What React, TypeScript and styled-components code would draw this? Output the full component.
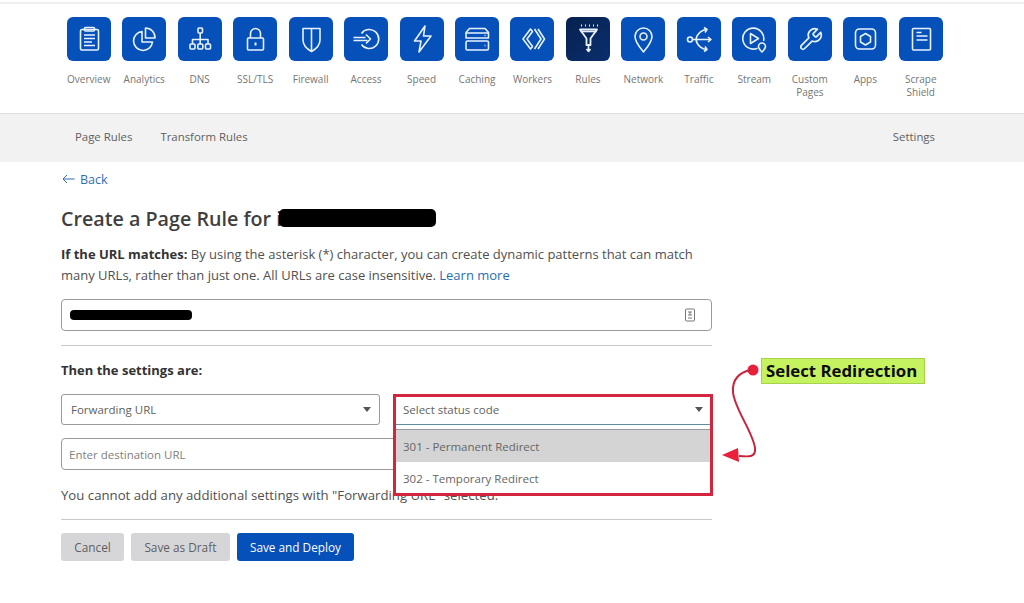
import * as React from 'react';
import styled, { createGlobalStyle } from 'styled-components';

const BLUE = '#0650ba';
const FONT = '"Open Sans", "Noto Sans", sans-serif';

const GlobalStyle = createGlobalStyle`
  html, body {
    margin: 0;
    background: #fff;
    overflow: hidden;
  }
  body {
    font-family: ${FONT};
    color: #4a4a4a;
  }
  * {
    box-sizing: border-box;
  }
`;

const NAV_ITEMS = [
  {
    label: 'Overview',
    icon: (
      <>
        <rect x="13.5" y="12.5" width="18" height="20.5" rx="1.5" />
        <rect x="17.5" y="10.5" width="10" height="3.5" rx="1" />
        <path d="M17 18h11M17 21.5h11M17 25h8M17 28.5h11" />
      </>
    ),
  },
  {
    label: 'Analytics',
    icon: (
      <>
        <path d="M20 14.5a9.5 9.5 0 1 0 10.5 10.5H20z" />
        <path d="M23.5 11a9.5 9.5 0 0 1 9.5 10h-9.5z" />
      </>
    ),
  },
  {
    label: 'DNS',
    icon: (
      <>
        <rect x="20" y="11" width="4.5" height="5" rx="1" />
        <path d="M22.2 16v11M14.5 27v-4.5h15.5V27" />
        <rect x="12" y="27" width="5" height="5" rx="1" />
        <rect x="19.8" y="27" width="5" height="5" rx="1" />
        <rect x="27.5" y="27" width="5" height="5" rx="1" />
      </>
    ),
  },
  {
    label: 'SSL/TLS',
    icon: (
      <>
        <rect x="14.5" y="21" width="16" height="12" rx="1" />
        <path d="M17.5 21v-4.5a5 5 0 0 1 10 0V21" />
        <path d="M22.5 25.5v3" strokeWidth="2" />
      </>
    ),
  },
  {
    label: 'Firewall',
    icon: (
      <>
        <path d="M14 11.5h17V23c0 5-4 9-8.500 11.500C18 32 14 28 14 23z" />
        <path d="M22.500 12v22" />
      </>
    ),
  },
  {
    label: 'Access',
    icon: (
      <>
        <path d="M17.500 16.500a9.500 9.500 0 1 1 0 11" />
        <path d="M9.500 20.500h12M9.500 23.500h14M22 17.500l4.500 4.500-4.500 4.500" />
      </>
    ),
  },
  {
    label: 'Speed',
    icon: <path d="M25 9L14.500 24H21l-2 11 12-16h-7.500z" />,
  },
  {
    label: 'Caching',
    icon: (
      <>
        <path d="M14.500 11.500h15.500l3.500 4v5.500h-22.500v-5.500z" />
        <rect x="11" y="24" width="22.500" height="9" rx="1.500" />
        <path d="M11 16h22.500M29.500 18.500h1M29.500 28.500h1" />
      </>
    ),
  },
  {
    label: 'Workers',
    icon: (
      <>
        <path d="M20.500 12L13 22l7.500 10 2-2.500L17 22l5.500-7.500z" />
        <path d="M24.500 12l6.500 10-6.500 10M28 12l6.500 10L28 32" />
      </>
    ),
  },
  {
    label: 'Rules',
    active: true,
    icon: (
      <>
        <path d="M15 8.500h1M19 8.500h1M23 8.500h1M27 8.500h1M31 8.500h1" strokeWidth="1.800" />
        <path d="M14 12.500h17l-6.500 9v6.500h-4v-6.500z" strokeWidth="1.800" />
        <path d="M14.500 14.500h16" />
        <path d="M22.500 28v6M20.500 32l2 2.500 2-2.500" />
      </>
    ),
  },
  {
    label: 'Network',
    icon: (
      <>
        <path d="M22.500 35c-4-5-8.500-10-8.500-15.500a8.500 8.500 0 0 1 17 0C31 25 26.500 30 22.500 35z" />
        <circle cx="22.500" cy="19.500" r="3.500" />
      </>
    ),
  },
  {
    label: 'Traffic',
    icon: (
      <>
        <circle cx="13" cy="22.500" r="2.500" />
        <path d="M15.500 22.500h18M31 20l3 2.500-3 2.500" />
        <path d="M30 12.500C24 13 22 16 20 19c-1 2-1 5 0 7 2 3 4 6 10 6.500" />
        <path d="M27 10.500l3 2-2 3M27 34.500l3-2-2-3" />
      </>
    ),
  },
  {
    label: 'Stream',
    icon: (
      <>
        <path d="M25.500 31.200a10.500 10.500 0 1 1 6-7.200" />
        <path d="M18.500 16.500l8 5-8 5z" />
        <path d="M30 35c-2-2-3.500-3.500-3.500-5.500a3.500 3.500 0 0 1 7 0c0 2-1.500 3.500-3.500 5.500z" />
      </>
    ),
  },
  {
    label: ['Custom', 'Pages'],
    icon: (
      <g transform="translate(9.500 9.500) scale(1.080)">
        <path d="M14.700 6.300a1 1 0 0 0 0 1.400l1.600 1.600a1 1 0 0 0 1.400 0l3.770-3.770a6 6 0 0 1-7.940 7.940l-6.910 6.910a2.120 2.120 0 0 1-3-3l6.910-6.910a6 6 0 0 1 7.940-7.940l-3.760 3.760z" />
      </g>
    ),
  },
  {
    label: 'Apps',
    icon: (
      <>
        <rect x="12.500" y="12" width="20" height="20" rx="4" />
        <path d="M22.500 16.500l5 3v5.500l-5 3-5-3v-5.500z" />
      </>
    ),
  },
  {
    label: ['Scrape', 'Shield'],
    icon: (
      <>
        <rect x="13.500" y="11.500" width="18" height="21.500" rx="1" />
        <path d="M17.500 15.500h5M17.500 19h11M17.500 23h11" />
      </>
    ),
  },
];

function App() {
  return (
    <Page>
      <GlobalStyle />
      <TopRule />

      <IconNav>
        {NAV_ITEMS.map((item) => {
          const lines = Array.isArray(item.label) ? item.label : [item.label];
          return (
            <NavItem key={lines[0]}>
              <Tile $active={item.active}>
                <svg width="44" height="44" viewBox="0 0 44 44">
                  {item.icon}
                </svg>
              </Tile>
              <NavLabel>
                {lines.map((line) => (
                  <div key={line}>{line}</div>
                ))}
              </NavLabel>
            </NavItem>
          );
        })}
      </IconNav>

      <SubNav>
        <SubNavLink>Page Rules</SubNavLink>
        <SubNavLink>Transform Rules</SubNavLink>
        <SubNavEnd>Settings</SubNavEnd>
      </SubNav>

      <Content>
        <BackLink>
          <svg width="13" height="10" viewBox="0 0 13 10" fill="none" stroke="#2f6db5" strokeWidth="1">
            <path d="M12.500 5H1M5 1L1 5l4 4" />
          </svg>
          Back
        </BackLink>

        <Heading>
          Create a Page Rule for i<HeadingBlot />
        </Heading>

        <Intro>
          <strong>If the URL matches:</strong> By using the asterisk (*) character, you can create
          dynamic patterns that can match many URLs, rather than just one. All URLs are case
          insensitive. <InlineLink>Learn more</InlineLink>
        </Intro>

        <UrlField>
          <InputBlot />
          <svg width="12" height="14" viewBox="0 0 12 14" fill="none" stroke="#777" strokeWidth="1">
            <rect x="1.500" y="1" width="9" height="12" rx="1" />
            <path d="M4 4h4M6 4v3M4 7h4M4 10h4" />
          </svg>
        </UrlField>

        <Divider />

        <SettingsTitle>Then the settings are:</SettingsTitle>

        <SelectRow>
          <SelectBox>
            Forwarding URL
            <Caret />
          </SelectBox>
          <StatusCell>
            <SelectBox $focused>
              Select status code
              <Caret />
            </SelectBox>
            <StatusMenu>
              <StatusOption $highlighted>301 - Permanent Redirect</StatusOption>
              <StatusOption>302 - Temporary Redirect</StatusOption>
            </StatusMenu>
            <RedFrame />
          </StatusCell>
        </SelectRow>

        <DestinationField>Enter destination URL</DestinationField>

        <Note>You cannot add any additional settings with "Forwarding URL" selected.</Note>

        <FooterDivider />

        <Actions>
          <Button>Cancel</Button>
          <Button>Save as Draft</Button>
          <Button $primary>Save and Deploy</Button>
        </Actions>
      </Content>

      <CalloutLabel>Select Redirection</CalloutLabel>
      <CalloutArrow width="60" height="110" viewBox="0 0 60 110" fill="none">
        <circle cx="38" cy="8" r="5.500" fill="#e8203a" />
        <path
          d="M36 8C24 10 17 18 18 30c1 16 20 40 22 56 1 9-5 9-16 8"
          stroke="#c8243c"
          strokeWidth="2"
        />
        <path d="M7 93l16-7 1 14z" fill="#e8203a" />
      </CalloutArrow>
    </Page>
  );
}

const Page = styled.div`
  position: relative;
  width: 1024px;
  height: 603px;
  overflow: hidden;
  background: #fff;
`;

const TopRule = styled.div`
  height: 4px;
  border-top: 2px solid #fff;
  background: #eee;
`;

const IconNav = styled.nav`
  display: grid;
  grid-template-columns: repeat(16, 55.47px);
  height: 109px;
  padding: 13px 0 0 61px;
`;

const NavItem = styled.div`
  display: flex;
  flex-direction: column;
  align-items: center;
`;

const Tile = styled.div<{ $active?: boolean }>`
  width: 44px;
  height: 44px;
  border-radius: 6px;
  background: ${(p) => (p.$active ? 'linear-gradient(135deg, #06214f, #0a2f6e)' : BLUE)};

  svg {
    display: block;
    fill: none;
    stroke: #e8f2ff;
    stroke-width: 1.600;
    stroke-linejoin: round;
  }
`;

const NavLabel = styled.div`
  margin-top: 12px;
  font-size: 10px;
  line-height: 13px;
  text-align: center;
  white-space: nowrap;
  color: #757575;
`;

const SubNav = styled.div`
  display: flex;
  align-items: center;
  gap: 28px;
  height: 49px;
  padding: 0 89px 4px 75px;
  background: #f2f2f3;
  border-top: 1px solid #dcdcdc;
`;

const SubNavLink = styled.span`
  font-size: 11.400px;
  color: #5f5f5f;
`;

const SubNavEnd = styled(SubNavLink)`
  margin-left: auto;
`;

const Content = styled.main`
  width: 651px;
  margin-left: 61px;
  padding-top: 8px;
`;

const BackLink = styled.div`
  display: flex;
  align-items: center;
  gap: 5px;
  height: 18px;
  margin-left: 1px;
  font-size: 12.500px;
  color: #2f6db5;
`;

const Heading = styled.h1`
  display: flex;
  align-items: center;
  height: 28px;
  margin: 16px 0 0;
  font-size: 19.700px;
  font-weight: 600;
  color: #3f3f3f;
`;

const HeadingBlot = styled.span`
  width: 157px;
  height: 18px;
  margin-left: -3px;
  border-radius: 5px;
  background: #000;
`;

const Intro = styled.p`
  margin: 12px 0 0;
  font-size: 13px;
  line-height: 21px;
  color: #505050;

  strong {
    font-weight: 700;
    color: #333;
  }
`;

const InlineLink = styled.span`
  color: #1f6fb5;
`;

const UrlField = styled.div`
  display: flex;
  align-items: center;
  justify-content: space-between;
  height: 32px;
  margin-top: 13px;
  padding: 0 15px 0 8px;
  border: 1px solid #9a9a9a;
  border-radius: 4px;
`;

const InputBlot = styled.span`
  width: 122px;
  height: 10px;
  border-radius: 4px;
  background: #000;
`;

const Divider = styled.hr`
  height: 1px;
  margin: 14px 0 0;
  border: 0;
  background: #c9c9c9;
`;

const SettingsTitle = styled.div`
  margin-top: 15px;
  font-size: 13px;
  line-height: 18px;
  font-weight: 700;
  color: #333;
`;

const SelectRow = styled.div`
  display: grid;
  grid-template-columns: 319px 319px;
  gap: 13px;
  margin-top: 15px;
`;

const SelectBox = styled.div<{ $focused?: boolean }>`
  position: relative;
  display: flex;
  align-items: center;
  height: 31px;
  padding: 0 9px;
  font-size: 11.500px;
  color: #5f5f5f;
  background: #fff;
  border: 1px solid ${(p) => (p.$focused ? 'transparent' : '#9a9a9a')};
  border-bottom-color: ${(p) => (p.$focused ? '#5f8f9f' : '#9a9a9a')};
  border-radius: 3px;
`;

const Caret = styled.span`
  position: absolute;
  right: 8px;
  top: 12px;
  border-left: 4.500px solid transparent;
  border-right: 4.500px solid transparent;
  border-top: 5px solid #555;
`;

const StatusCell = styled.div`
  position: relative;
  z-index: 2;
`;

const StatusMenu = styled.div`
  position: absolute;
  top: 35px;
  left: 0;
  right: 0;
  background: #fff;
  border-top: 1px solid #9a9a9a;
`;

const StatusOption = styled.div<{ $highlighted?: boolean }>`
  display: flex;
  align-items: center;
  height: 32px;
  padding: 0 10px;
  font-size: 11.500px;
  color: #666;
  background: ${(p) => (p.$highlighted ? '#d4d4d4' : '#fff')};
`;

const RedFrame = styled.div`
  position: absolute;
  top: 0;
  left: 0;
  width: 320px;
  height: 102px;
  border: 3px solid #d3263e;
  pointer-events: none;
`;

const DestinationField = styled.div`
  display: flex;
  align-items: center;
  height: 32px;
  margin-top: 13px;
  padding: 0 7px;
  font-size: 11.500px;
  color: #808080;
  border: 1px solid #9a9a9a;
  border-radius: 4px;
`;

const Note = styled.p`
  margin: 16px 0 0;
  font-size: 13.200px;
  line-height: 18px;
  color: #505050;
`;

const FooterDivider = styled(Divider)`
  margin-top: 15px;
`;

const Actions = styled.div`
  display: flex;
  gap: 7px;
  margin-top: 13px;
`;

const Button = styled.div<{ $primary?: boolean }>`
  display: flex;
  align-items: center;
  height: 28px;
  padding: 0 13.300px;
  font-size: 11.800px;
  border-radius: 3px;
  color: ${(p) => (p.$primary ? '#fff' : '#5f5f5f')};
  background: ${(p) => (p.$primary ? BLUE : '#d6d6d9')};
`;

const CalloutLabel = styled.div`
  position: absolute;
  left: 761px;
  top: 358px;
  display: flex;
  align-items: center;
  width: 164px;
  height: 26px;
  padding-left: 4px;
  font-size: 16.800px;
  line-height: 22px;
  font-weight: 700;
  white-space: nowrap;
  color: #0c0c0c;
  background: #c5f25f;
  border: 1px solid #a6d24e;
`;

const CalloutArrow = styled.svg`
  position: absolute;
  left: 715px;
  top: 362px;
`;

export default App;
